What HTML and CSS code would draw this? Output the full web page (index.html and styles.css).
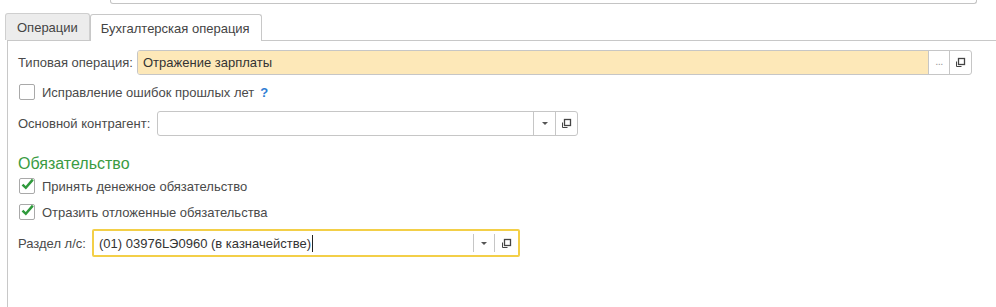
FILE: index.html
```html
<!DOCTYPE html>
<html lang="ru">
<head>
    <meta charset="UTF-8">
    <meta name="viewport" content="width=device-width, initial-scale=1.0">
    <title>Бухгалтерская операция</title>
    <link rel="stylesheet" href="styles.css">
</head>
<body>
    <div class="top-field"></div>

    <div class="tabs">
        <div class="tab">Операции</div>
        <div class="tab active">Бухгалтерская операция</div>
    </div>

    <div class="panel">
        <div class="row row-type">
            <span class="label">Типовая операция:</span>
            <div class="field field-type">
                <div class="field-text filled">Отражение зарплаты</div>
                <div class="field-btn dots">...</div>
                <div class="field-btn">
                    <svg class="copy-icon" width="11" height="11" viewBox="0 0 11 11">
                        <rect x="3.5" y="1.5" width="6" height="6" fill="none" stroke="#444" stroke-width="1.3"/>
                        <path d="M1.5 4.5 V9.5 H6.5" fill="none" stroke="#444" stroke-width="1"/>
                    </svg>
                </div>
            </div>
        </div>

        <div class="row row-check first-check">
            <span class="checkbox"></span>
            <span class="check-text">Исправление ошибок прошлых лет</span>
            <span class="help">?</span>
        </div>

        <div class="row row-contr">
            <span class="label">Основной контрагент:</span>
            <div class="field field-contr">
                <div class="field-text"></div>
                <div class="field-btn">
                    <span class="arrow"></span>
                </div>
                <div class="field-btn">
                    <svg class="copy-icon" width="11" height="11" viewBox="0 0 11 11">
                        <rect x="3.5" y="1.5" width="6" height="6" fill="none" stroke="#444" stroke-width="1.3"/>
                        <path d="M1.5 4.5 V9.5 H6.5" fill="none" stroke="#444" stroke-width="1"/>
                    </svg>
                </div>
            </div>
        </div>

        <div class="group-title">Обязательство</div>

        <div class="row row-check check-a">
            <span class="checkbox checked">
                <svg width="15" height="15" viewBox="0 0 15 15">
                    <path d="M2.5 7.6 L5.8 10.8 L12.8 2.6" fill="none" stroke="#2f9a3c" stroke-width="2.5"/>
                </svg>
            </span>
            <span class="check-text">Принять денежное обязательство</span>
        </div>

        <div class="row row-check check-b">
            <span class="checkbox checked">
                <svg width="15" height="15" viewBox="0 0 15 15">
                    <path d="M2.5 7.6 L5.8 10.8 L12.8 2.6" fill="none" stroke="#2f9a3c" stroke-width="2.5"/>
                </svg>
            </span>
            <span class="check-text">Отразить отложенные обязательства</span>
        </div>

        <div class="row row-section">
            <span class="label">Раздел л/с:</span>
            <div class="field field-section">
                <div class="field-text">(01) 03976LЭ0960 (в казначействе)<span class="caret"></span></div>
                <div class="field-btn">
                    <span class="arrow"></span>
                </div>
                <div class="field-btn wide">
                    <svg class="copy-icon" width="11" height="11" viewBox="0 0 11 11">
                        <rect x="3.5" y="1.5" width="6" height="6" fill="none" stroke="#444" stroke-width="1.3"/>
                        <path d="M1.5 4.5 V9.5 H6.5" fill="none" stroke="#444" stroke-width="1"/>
                    </svg>
                </div>
            </div>
        </div>
    </div>
</body>
</html>
```

FILE: styles.css
```css
html, body {
    margin: 0;
    height: 100%;
    overflow: hidden;
}

body {
    background-color: #fff;
    font-family: "Liberation Sans", Arial, sans-serif;
    font-size: 13px;
    color: #4a4a4a;
}

.top-field {
    margin-left: 110px;
    width: 865px;
    height: 3px;
    border: 1px solid #c4c4c4;
    border-top: none;
    border-radius: 0 0 3px 3px;
}

.tabs {
    display: flex;
    margin-top: 9px;
    margin-left: 5px;
    height: 27px;
}

.tab {
    display: flex;
    align-items: center;
    padding: 0 11px;
    background-color: #ececec;
    border: 1px solid #cfcfcf;
    border-bottom: none;
    border-radius: 3px 3px 0 0;
    color: #444;
}

.tab.active {
    background-color: #fff;
    padding: 0 11px 0 10px;
    position: relative;
    top: 1px;
    height: 27px;
    box-sizing: border-box;
    border-color: #c8c8c8;
}

.panel {
    border-left: 1px solid #c8c8c8;
    border-top: 1px solid #c8c8c8;
    margin-left: 7px;
    height: 268px;
    padding: 9px 0 0 10px;
    box-sizing: border-box;
}

.row {
    display: flex;
    align-items: center;
}

.label {
    white-space: nowrap;
    flex-shrink: 0;
}

.row-type .label {
    width: 119px;
}

.row-contr .label {
    width: 139px;
}

.row-section .label {
    width: 74px;
}

.field {
    display: flex;
    border: 1px solid #c6c6c6;
    border-radius: 3px;
    box-sizing: border-box;
    background-color: #fff;
    overflow: hidden;
}

.field-text {
    flex: 1;
    display: flex;
    align-items: center;
    padding-left: 5px;
    color: #333;
}

.field-text.filled {
    background-color: #fde8b8;
}

.field-btn {
    width: 21px;
    display: flex;
    align-items: center;
    justify-content: center;
    border-left: 1px solid #c6c6c6;
}

.field-btn.dots {
    color: #9a9a9a;
    font-size: 11px;
    letter-spacing: -0.5px;
    padding-bottom: 3px;
    box-sizing: border-box;
}

.arrow {
    width: 0;
    height: 0;
    border-left: 3px solid transparent;
    border-right: 3px solid transparent;
    border-top: 3px solid #555;
}

.row-type .field {
    width: 835px;
    height: 25px;
}

.row-contr {
    margin-top: 7px;
}

.row-contr .field {
    width: 421px;
    height: 25px;
}

.row-check {
    height: 24px;
}

.first-check {
    margin-top: 5px;
}

.checkbox {
    width: 14px;
    height: 14px;
    border: 1px solid #a9a9a9;
    border-radius: 2px;
    background-color: #fff;
    margin-left: 1px;
    margin-right: 7px;
    flex-shrink: 0;
    position: relative;
}

.checkbox.checked svg {
    position: absolute;
    left: 0;
    top: -2px;
}

.help {
    margin-left: 6px;
    color: #2d7dd4;
    font-weight: bold;
}

.group-title {
    margin-top: 18px;
    height: 20px;
    line-height: 20px;
    font-size: 16px;
    color: #3a9b42;
}

.check-a {
    margin-top: 1px;
    height: 22px;
}

.check-b {
    margin-top: 4px;
    height: 22px;
}

.row-section {
    margin-top: 6px;
}

.row-section .field {
    width: 428px;
    height: 28px;
    border: 2px solid #f3cf48;
    border-radius: 2px;
}

.row-section .field-btn {
    border-left: none;
    position: relative;
}

.row-section .field-btn::before {
    content: "";
    position: absolute;
    left: 0;
    top: 3px;
    bottom: 3px;
    border-left: 1px solid #c6c6c6;
}

.row-section .field-btn.wide {
    width: 24px;
}

.caret {
    display: inline-block;
    width: 1px;
    height: 17px;
    background-color: #222;
    margin-left: 1px;
}
```
